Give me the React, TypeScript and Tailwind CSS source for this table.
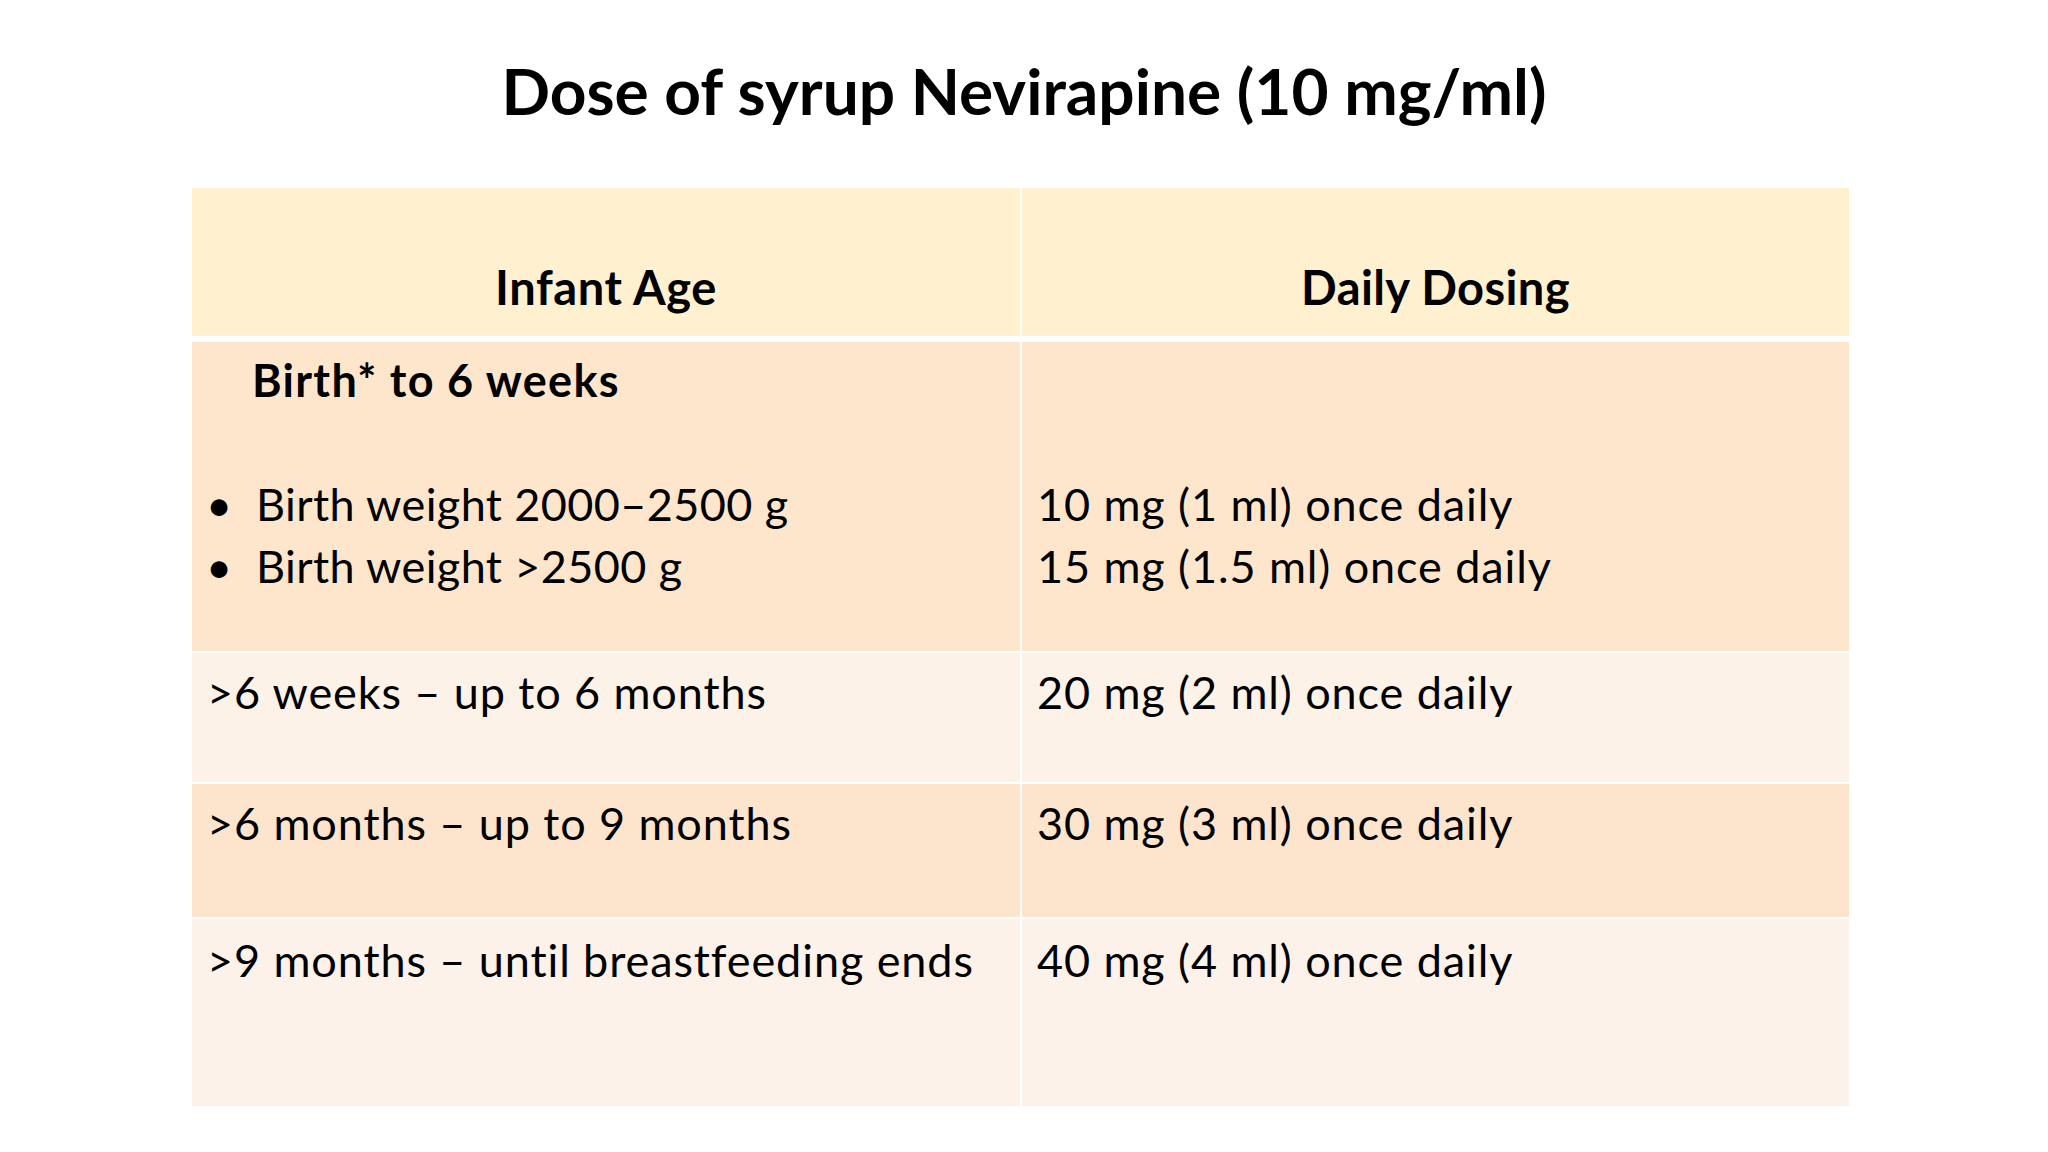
import React from "react";

const font = { fontFamily: "Lato, 'Noto Sans', sans-serif" };

export default function App() {
  return (
    <div className="w-[2048px] h-[1152px] bg-white text-black" style={font}>
      <div className="h-[188px] flex items-center justify-center pb-[6px]">
        <h1 className="text-[64px] font-bold leading-none tracking-[0px]">
          Dose of syrup Nevirapine (10 mg/ml)
        </h1>
      </div>
      <div className="ml-[192px] w-[1657px] flex flex-col text-[45px] leading-[62px] tracking-[0.9px]">
        {/* header */}
        <div className="flex gap-[2px] h-[148px] bg-white">
          <div className="w-[828px] bg-[#FFF0CF] flex items-end justify-center pb-[18px] font-bold text-[47px] tracking-[0.6px]">
            Infant Age
          </div>
          <div className="flex-1 bg-[#FFF0CF] flex items-end justify-center pb-[18px] font-bold text-[47px] tracking-[0.4px]">
            Daily Dosing
          </div>
        </div>
        <div className="h-[6px]" />
        {/* row 1 */}
        <div className="flex gap-[2px] h-[309px]">
          <div className="w-[828px] bg-[#FDE6CC] pt-[7px]">
            <div className="pl-[60px] font-bold tracking-[1.3px]">Birth* to 6 weeks</div>
            <div className="h-[62px]" />
            <div className="flex">
              <span className="w-[64px] pl-[14px]">•</span>
              <span className="tracking-[0.4px]">Birth weight 2000–2500 g</span>
            </div>
            <div className="flex">
              <span className="w-[64px] pl-[14px]">•</span>
              <span className="tracking-[0.4px]">Birth weight &gt;2500 g</span>
            </div>
          </div>
          <div className="flex-1 bg-[#FDE6CC] pt-[7px] pl-[15px]">
            <div className="h-[124px]" />
            <div>10 mg (1 ml) once daily</div>
            <div>15 mg (1.5 ml) once daily</div>
          </div>
        </div>
        <div className="h-[2px]" />
        {/* row 2 */}
        <div className="flex gap-[2px] h-[129px]">
          <div className="w-[828px] bg-[#FDF2E8] pt-[8px] pl-[15px]">&gt;6 weeks – up to 6 months</div>
          <div className="flex-1 bg-[#FDF2E8] pt-[8px] pl-[15px]">20 mg (2 ml) once daily</div>
        </div>
        <div className="h-[2px]" />
        {/* row 3 */}
        <div className="flex gap-[2px] h-[133px]">
          <div className="w-[828px] bg-[#FCE5CC] pt-[8px] pl-[15px]">&gt;6 months – up to 9 months</div>
          <div className="flex-1 bg-[#FCE5CC] pt-[8px] pl-[15px]">30 mg (3 ml) once daily</div>
        </div>
        <div className="h-[2px]" />
        {/* row 4 */}
        <div className="flex gap-[2px] h-[187px]">
          <div className="w-[828px] bg-[#FDF2E9] pt-[10px] pl-[15px]">&gt;9 months – until breastfeeding ends</div>
          <div className="flex-1 bg-[#FDF2E9] pt-[10px] pl-[15px]">40 mg (4 ml) once daily</div>
        </div>
      </div>
    </div>
  );
}
